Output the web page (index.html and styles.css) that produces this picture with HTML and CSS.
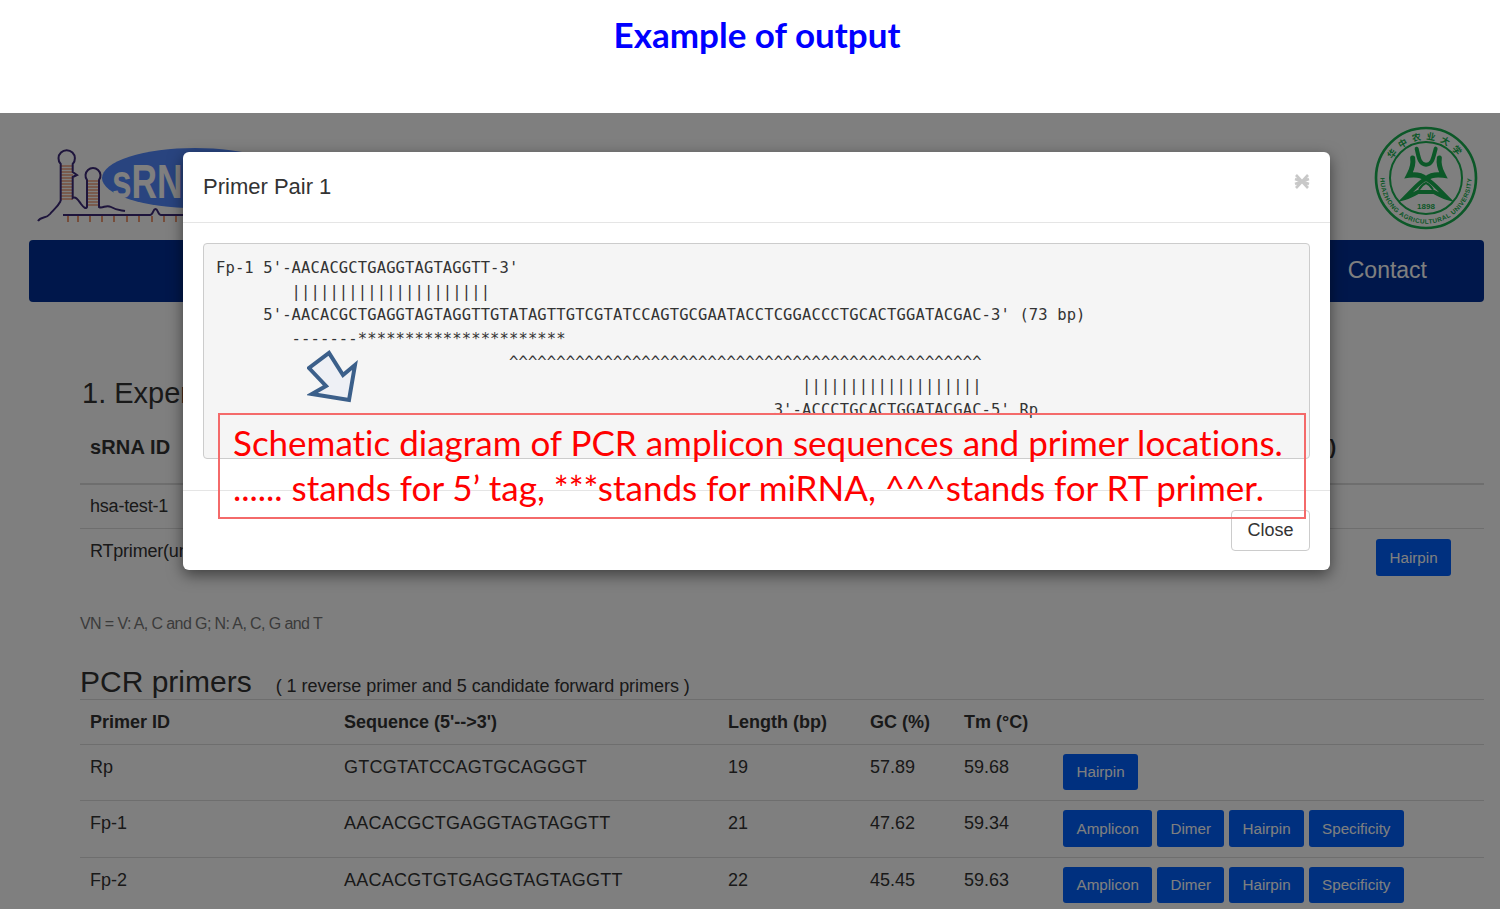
FILE: index.html
```html
<!DOCTYPE html>
<html lang="en">
<head>
  <meta charset="UTF-8">
  <title>Example of output</title>
  <link rel="stylesheet" href="styles.css">
</head>
<body>
  <h1 class="slide-title">Example of output</h1>

  <div class="stage">
    <div class="logo-row">
      <svg class="logo" width="260" height="90" viewBox="30 140 260 90">
        <ellipse cx="195" cy="178" rx="93" ry="30" fill="#5288ff"/>
        <text x="112" y="198" class="logo-text" textLength="96" lengthAdjust="spacingAndGlyphs">sRNA</text>
        <g stroke="#e8703a" stroke-width="1.2">
          <path d="M61 166H73M61 169H73M61 172H73M61 175H73M61 178H73M61 181H73M61 184H73M61 187H73M61 190H73M61 193H73M61 196H73M61 199H73"/>
          <path d="M87 181H99M87 184H99M87 187H99M87 190H99M87 193H99M87 196H99M87 199H99M87 202H99M87 205H99"/>
          <path d="M68 216V222M78 216V222M90 216V222M102 216V222M114 216V222M127 216V222M139 216V222M152 216V222M164 216V222M176 216V222" stroke-width="1.4"/>
        </g>
        <g fill="none" stroke="#3c2a78" stroke-width="2">
          <path d="M60.7 201V164A8.2 8.2 0 1 1 72.7 164V172L77 175L72.7 177V198C76 196 78 200 81 204C84 208 86 209 87 207V180A7.5 7.5 0 1 1 99 180V207C103 209 106 204 111 207C116 210 120 210 125 211"/>
          <path d="M38 221C41 216 46 219 50 214C53 210 57 208 60.7 201"/>
          <path d="M63 215H150C153 215 153 209 155.500 209C158 209 158 215 161 215H185"/>
        </g>
      </svg>

      <svg class="seal" width="112" height="112" viewBox="0 0 336 336">
        <defs>
          <path id="sealTop" d="M64 119A115 115 0 0 1 272 119"/>
          <path id="sealBottom" d="M32.200 150A137 137 0 1 0 303.800 150"/>
        </defs>
        <circle cx="168" cy="168" r="150" fill="#fff" stroke="#18b050" stroke-width="8"/>
        <circle cx="168" cy="168" r="108" fill="none" stroke="#18b050" stroke-width="6"/>
        <text class="seal-cn"><textPath href="#sealTop" startOffset="50%" text-anchor="middle">华中农业大学</textPath></text>
        <text class="seal-en"><textPath href="#sealBottom" startOffset="50%" text-anchor="middle">HUAZHONG AGRICULTURAL UNIVERSITY</textPath></text>
        <text class="seal-year" x="168" y="260" text-anchor="middle">1898</text>
        <g fill="none" stroke="#18b050" stroke-linecap="round">
          <path d="M140 80C146 105 148 128 168 128C188 128 190 105 197 80" stroke-width="12"/>
          <path d="M128 108C132 133 122 148 116 160C140 156 155 160 168 170C181 160 196 156 220 160C214 148 204 133 208 108" stroke-width="15"/>
          <path d="M168 170C150 178 132 200 104 228C118 224 130 218 144 210H192C206 218 218 224 232 228C204 200 186 178 168 170Z" stroke-width="12"/>
          <path d="M148 202C154 192 160 186 168 183C176 186 182 192 188 202" stroke-width="6"/>
        </g>
      </svg>
    </div>

    <nav class="main-nav">
      <a class="nav-link">Contact</a>
    </nav>

    <main class="content">
      <h2 class="section-title">1. Experiment information</h2>
      <table class="data-table exp-table">
        <colgroup>
          <col class="ec1"><col class="ec2"><col class="ec3"><col class="ec4"><col class="ec5"><col>
        </colgroup>
        <thead>
          <tr><th>sRNA ID</th><th></th><th></th><th></th><th>Tm (°C)</th><th></th></tr>
        </thead>
        <tbody>
          <tr><td>hsa-test-1</td><td></td><td></td><td></td><td></td><td></td></tr>
          <tr><td>RTprimer(universal)</td><td></td><td></td><td></td><td></td><td><button class="btn">Hairpin</button></td></tr>
        </tbody>
      </table>

      <p class="note">VN = V: A, C and G; N: A, C, G and T</p>

      <div class="primer-head">
        <h3>PCR primers</h3>
        <span>( 1 reverse primer and 5 candidate forward primers )</span>
      </div>
      <table class="data-table primer-table">
        <colgroup>
          <col class="pc1"><col class="pc2"><col class="pc3"><col class="pc4"><col class="pc5"><col>
        </colgroup>
        <thead>
          <tr><th>Primer ID</th><th>Sequence (5'--&gt;3')</th><th>Length (bp)</th><th>GC (%)</th><th>Tm (°C)</th><th></th></tr>
        </thead>
        <tbody>
          <tr>
            <td>Rp</td><td class="seq">GTCGTATCCAGTGCAGGGT</td><td>19</td><td>57.89</td><td>59.68</td>
            <td><div class="btn-row"><button class="btn">Hairpin</button></div></td>
          </tr>
          <tr>
            <td>Fp-1</td><td class="seq">AACACGCTGAGGTAGTAGGTT</td><td>21</td><td>47.62</td><td>59.34</td>
            <td><div class="btn-row"><button class="btn">Amplicon</button><button class="btn">Dimer</button><button class="btn">Hairpin</button><button class="btn">Specificity</button></div></td>
          </tr>
          <tr>
            <td>Fp-2</td><td class="seq">AACACGTGTGAGGTAGTAGGTT</td><td>22</td><td>45.45</td><td>59.63</td>
            <td><div class="btn-row"><button class="btn">Amplicon</button><button class="btn">Dimer</button><button class="btn">Hairpin</button><button class="btn">Specificity</button></div></td>
          </tr>
        </tbody>
      </table>
    </main>

    <div class="backdrop"></div>

    <div class="modal">
      <div class="modal-header">
        <h4>Primer Pair 1</h4>
        <svg class="modal-x" width="16" height="15" viewBox="0 0 16 15">
          <path d="M2 1L14 14M14 1L2 14M1 5L15 10M15 5L1 10" stroke="#c8c8c8" stroke-width="2.6" fill="none"/>
        </svg>
      </div>
      <div class="modal-body">
<pre class="alignment">Fp-1 5'-AACACGCTGAGGTAGTAGGTT-3'
        |||||||||||||||||||||
     5'-AACACGCTGAGGTAGTAGGTTGTATAGTTGTCGTATCCAGTGCGAATACCTCGGACCCTGCACTGGATACGAC-3' (73 bp)
        -------**********************
                               ^^^^^^^^^^^^^^^^^^^^^^^^^^^^^^^^^^^^^^^^^^^^^^^^^^
                                                              |||||||||||||||||||
                                                           3'-ACCCTGCACTGGATACGAC-5' Rp

</pre>
      </div>
      <div class="modal-footer">
        <button class="btn-close">Close</button>
      </div>
    </div>

    <svg class="callout-arrow" width="52" height="54" viewBox="307 350 52 54">
      <path d="M349 400L355 365L343 375L329 353L309 368L326 386L312 394Z" fill="#eef0f5" stroke="#3b5f8a" stroke-width="4"/>
    </svg>

    <div class="callout">
      <p>Schematic diagram of PCR amplicon sequences and primer locations.</p>
      <p>...... stands for 5’ tag, ***stands for miRNA, ^^^stands for RT primer.</p>
    </div>
  </div>
</body>
</html>
```

FILE: styles.css
```css
html, body {
  margin: 0;
  padding: 0;
  height: 909px;
  overflow: hidden;
  background: #fff;
}
body {
  font-family: "Liberation Sans", Arial, sans-serif;
  color: #333;
}
.slide-title {
  margin: 0;
  height: 113px;
  padding: 13px 0 0 14px;
  box-sizing: border-box;
  text-align: center;
  font-family: Lato, sans-serif;
  font-size: 35px;
  line-height: 42px;
  font-weight: 700;
  font-variant-ligatures: none;
  color: #0000ff;
}
.stage {
  position: relative;
  height: 796px;
  overflow: hidden;
  background: #fff;
  padding: 0 16px 0 29px;
}
.logo-row {
  display: flex;
  justify-content: space-between;
  height: 127px;
}
.logo {
  margin-top: 27px;
  margin-left: 1px;
}
.logo-text {
  font-family: "Liberation Sans", sans-serif;
  font-weight: 700;
  font-size: 48px;
  fill: #fff;
}
.seal {
  margin-top: 9px;
  margin-right: 2px;
}
.seal-cn {
  font-family: "Noto Sans CJK SC", sans-serif;
  font-size: 27px;
  font-weight: 700;
  letter-spacing: 14px;
  fill: #18b050;
}
.seal-en {
  font-family: "Liberation Sans", sans-serif;
  font-size: 19px;
  font-weight: 700;
  letter-spacing: 1.500px;
  fill: #18b050;
}
.seal-year {
  font-family: "Liberation Sans", sans-serif;
  font-size: 24px;
  font-weight: 700;
  fill: #18b050;
}
.main-nav {
  display: flex;
  justify-content: flex-end;
  align-items: center;
  height: 60px;
  padding: 0 57px 2px 0;
  background: #002f96;
  border-radius: 4px;
}
.nav-link {
  color: #fff;
  font-size: 23px;
}
.content {
  margin-left: 51px;
  padding-top: 71px;
}
.section-title {
  margin: 0 0 12px;
  padding-left: 2px;
  font-size: 29px;
  line-height: 40px;
  font-weight: 400;
}
.data-table {
  width: 100%;
  table-layout: fixed;
  border-collapse: collapse;
  font-size: 18px;
  line-height: 25px;
}
.data-table th {
  text-align: left;
  padding: 10px 10px 9px;
  white-space: nowrap;
  font-weight: 700;
  border-bottom: 1px solid #ddd;
}
.data-table td {
  padding: 10px 10px 9px;
  vertical-align: top;
  white-space: nowrap;
  border-top: 1px solid #ddd;
}
.seq {
  letter-spacing: 0.25px;
}
.exp-table th {
  padding: 10px 10px 23px;
  font-size: 20px;
  letter-spacing: 0.15px;
  border-bottom-width: 2px;
}
.exp-table td {
  padding: 9px 10px 9px;
  letter-spacing: -0.2px;
}
.exp-table tr + tr td {
  padding: 10px 10px 8px;
}
.exp-table .btn {
  letter-spacing: 0;
}
.ec1 { width: 254px; }
.ec2 { width: 530px; }
.ec3 { width: 200px; }
.ec4 { width: 190px; }
.ec5 { width: 112px; }
.pc1 { width: 254px; }
.pc2 { width: 384px; }
.pc3 { width: 142px; }
.pc4 { width: 94px; }
.pc5 { width: 99px; }
.note {
  margin: 29px 0 0;
  font-size: 16px;
  line-height: 22px;
  letter-spacing: -0.6px;
  color: #777;
}
.primer-head {
  display: flex;
  align-items: baseline;
  gap: 24px;
  margin-top: 27px;
  height: 37px;
}
.primer-head h3 {
  margin: 0;
  font-size: 30px;
  line-height: 39px;
  font-weight: 400;
}
.primer-head span {
  font-size: 18px;
  letter-spacing: -0.04px;
}
.primer-table {
  border-top: 1px solid #ddd;
}
.btn-row {
  display: flex;
  gap: 4.500px;
  margin: -1px 0 1px;
}
.btn {
  display: inline-block;
  height: 36.500px;
  padding: 0 13.500px;
  border: 0;
  border-radius: 3px;
  background: #0060ff;
  color: #fff;
  font-family: "Liberation Sans", sans-serif;
  font-size: 15.200px;
}
.backdrop {
  position: absolute;
  inset: 0;
  background: rgba(0, 0, 0, 0.5);
}
.modal {
  position: absolute;
  left: 183px;
  top: 39px;
  width: 1147px;
  background: #fff;
  border-radius: 6px;
  box-shadow: 0 5px 15px rgba(0, 0, 0, 0.5);
}
.modal-header {
  display: flex;
  justify-content: space-between;
  align-items: flex-start;
  height: 71px;
  box-sizing: border-box;
  padding: 20px 20px 0;
  border-bottom: 1px solid #e5e5e5;
}
.modal-header h4 {
  margin: 0;
  font-size: 22px;
  line-height: 30px;
  font-weight: 400;
}
.modal-x {
  margin-top: 2px;
}
.modal-body {
  padding: 20px;
  border-bottom: 1px solid #e5e5e5;
}
.alignment {
  margin: 0 0 11px;
  padding: 13px 12px 12px;
  background: #f5f5f5;
  border: 1px solid #ccc;
  border-radius: 4px;
  overflow: hidden;
  font-family: "DejaVu Sans Mono", monospace;
  font-size: 15.500px;
  letter-spacing: 0.12px;
  line-height: 23.600px;
  color: #333;
}
.modal-footer {
  display: flex;
  justify-content: flex-end;
  padding: 19px 20px;
}
.btn-close {
  width: 79px;
  height: 41px;
  padding: 0;
  background: #fff;
  border: 1px solid #ccc;
  border-radius: 4px;
  color: #333;
  font-family: "Liberation Sans", sans-serif;
  font-size: 18px;
}
.callout-arrow {
  position: absolute;
  left: 307px;
  top: 237px;
}
.callout {
  position: absolute;
  left: 218px;
  top: 300px;
  width: 1088px;
  height: 106px;
  box-sizing: border-box;
  padding: 5px 0 0 13px;
  border: 2px solid #f46a6a;
  font-family: Lato, sans-serif;
  font-size: 35px;
  line-height: 45px;
  font-variant-ligatures: none;
  color: #ff0000;
  white-space: nowrap;
}
.callout p {
  margin: 0;
}
```
